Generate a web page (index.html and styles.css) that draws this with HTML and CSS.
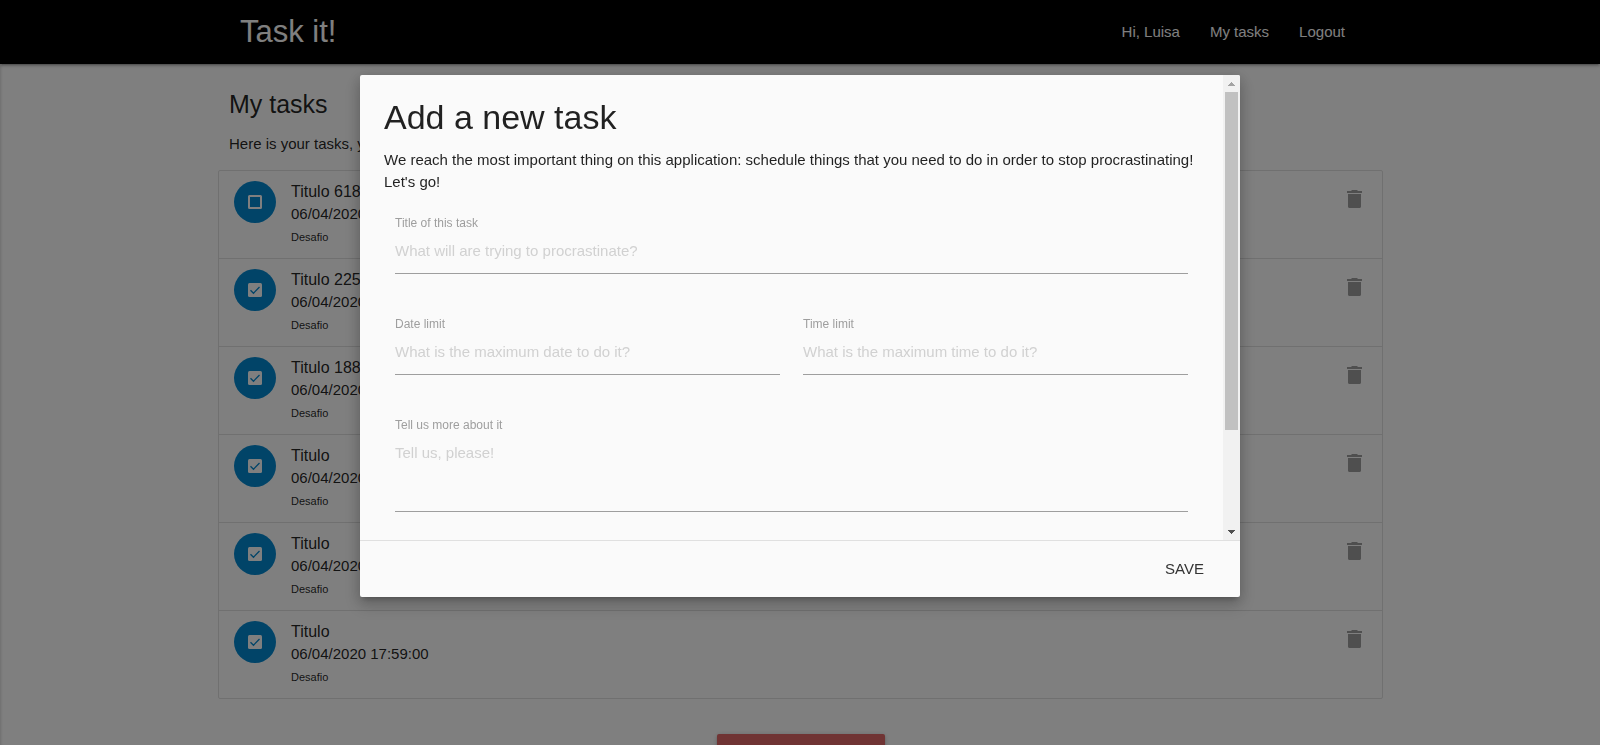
FILE: index.html
```html
<!DOCTYPE html>
<html lang="en">
<head>
<meta charset="utf-8">
<meta name="viewport" content="width=device-width, initial-scale=1">
<title>Task it!</title>
<link rel="stylesheet" href="styles.css">
</head>
<body>
<svg class="sprite" aria-hidden="true">
  <symbol id="box" viewBox="0 0 18 18"><path fill-rule="evenodd" d="M3.500 2h11A1.500 1.500 0 0 1 16 3.500v11a1.500 1.500 0 0 1-1.500 1.500h-11A1.500 1.500 0 0 1 2 14.500v-11A1.500 1.500 0 0 1 3.500 2zM4 4v10h10V4z"/></symbol>
  <symbol id="box-checked" viewBox="0 0 18 18"><rect x="2" y="2" width="14" height="14" rx="1.500"/><path d="M4.500 9.200l3 3 6-6.200" fill="none" stroke="#0288d1" stroke-width="1.300"/></symbol>
  <symbol id="trash" viewBox="0 0 24 24"><path d="M5 7h13v12.500c0 .9-.6 1.500-1.500 1.500h-10c-.9 0-1.500-.6-1.500-1.500zM4 4h4l1-1h5l1 1h4v2H4z"/></symbol>
</svg>

<header class="navbar">
  <div class="container navbar-inner">
    <a class="logo" href="#">Task it!</a>
    <nav class="nav-links">
      <a href="#">Hi, Luisa</a>
      <a href="#">My tasks</a>
      <a href="#">Logout</a>
    </nav>
  </div>
</header>

<main class="page">
  <div class="container">
    <div class="tasks">
      <h1 class="tasks-title">My tasks</h1>
      <p class="tasks-intro">Here is your tasks, you can do it!</p>
      <ul class="task-list">
        <li class="task">
          <button class="task-state" aria-label="Mark as done"><svg><use href="#box"/></svg></button>
          <div class="task-text"><span class="task-name">Titulo 618</span><span>06/04/2020 17:59:00</span><small>Desafio</small></div>
          <button class="task-delete" aria-label="Delete"><svg><use href="#trash"/></svg></button>
        </li>
        <li class="task">
          <button class="task-state" aria-label="Mark as pending"><svg><use href="#box-checked"/></svg></button>
          <div class="task-text"><span class="task-name">Titulo 225</span><span>06/04/2020 17:59:00</span><small>Desafio</small></div>
          <button class="task-delete" aria-label="Delete"><svg><use href="#trash"/></svg></button>
        </li>
        <li class="task">
          <button class="task-state" aria-label="Mark as pending"><svg><use href="#box-checked"/></svg></button>
          <div class="task-text"><span class="task-name">Titulo 188</span><span>06/04/2020 17:59:00</span><small>Desafio</small></div>
          <button class="task-delete" aria-label="Delete"><svg><use href="#trash"/></svg></button>
        </li>
        <li class="task">
          <button class="task-state" aria-label="Mark as pending"><svg><use href="#box-checked"/></svg></button>
          <div class="task-text"><span class="task-name">Titulo</span><span>06/04/2020 17:59:00</span><small>Desafio</small></div>
          <button class="task-delete" aria-label="Delete"><svg><use href="#trash"/></svg></button>
        </li>
        <li class="task">
          <button class="task-state" aria-label="Mark as pending"><svg><use href="#box-checked"/></svg></button>
          <div class="task-text"><span class="task-name">Titulo</span><span>06/04/2020 17:59:00</span><small>Desafio</small></div>
          <button class="task-delete" aria-label="Delete"><svg><use href="#trash"/></svg></button>
        </li>
        <li class="task">
          <button class="task-state" aria-label="Mark as pending"><svg><use href="#box-checked"/></svg></button>
          <div class="task-text"><span class="task-name">Titulo</span><span>06/04/2020 17:59:00</span><small>Desafio</small></div>
          <button class="task-delete" aria-label="Delete"><svg><use href="#trash"/></svg></button>
        </li>
      </ul>
      <button class="add-button" aria-label="Add a new task"></button>
    </div>
  </div>
</main>

<div class="overlay"></div>

<form class="modal" role="dialog" aria-labelledby="modal-title">
  <div class="modal-body">
    <div class="modal-content">
      <h2 class="modal-title" id="modal-title">Add a new task</h2>
      <p class="modal-intro">We reach the most important thing on this application: schedule things that you need to do in order to stop procrastinating! Let's go!</p>
      <div class="fields">
        <div class="field field-wide">
          <label for="title">Title of this task</label>
          <input id="title" type="text" placeholder="What will are trying to procrastinate?">
        </div>
        <div class="field">
          <label for="date">Date limit</label>
          <input id="date" type="text" placeholder="What is the maximum date to do it?">
        </div>
        <div class="field">
          <label for="time">Time limit</label>
          <input id="time" type="text" placeholder="What is the maximum time to do it?">
        </div>
        <div class="field field-wide">
          <label for="about">Tell us more about it</label>
          <textarea id="about" placeholder="Tell us, please!"></textarea>
        </div>
      </div>
    </div>
    <div class="scrollbar" aria-hidden="true">
      <svg class="arrow arrow-up" viewBox="0 0 17 17"><path d="M5 11h7v-1h-1v-1h-1v-1h-1v-1h-1v1h-1v1h-1v1h-1z"/></svg>
      <div class="track"><div class="thumb"></div></div>
      <svg class="arrow" viewBox="0 0 17 17"><path d="M5 7h7v1h-1v1h-1v1h-1v1h-1v-1h-1v-1h-1v-1h-1z"/></svg>
    </div>
  </div>
  <div class="modal-footer"><button class="save" type="button">SAVE</button></div>
</form>
</body>
</html>
```

FILE: styles.css
```css
* { box-sizing: border-box; }

body {
  display: flex;
  flex-direction: column;
  margin: 0;
  height: 100vh;
  overflow: hidden;
  background: #fff;
  color: rgba(0, 0, 0, 0.87);
  font: 15px/22px "Liberation Sans", Arial, sans-serif;
}

h1, h2, p, ul { margin: 0; padding: 0; font-weight: 400; }
a { color: inherit; text-decoration: none; }
button { border: 0; padding: 0; background: none; color: inherit; font: inherit; cursor: pointer; }
.sprite { position: absolute; width: 0; height: 0; }

.container { width: 70%; margin: 0 auto; }

.navbar {
  position: relative;
  flex: none;
  background: #000;
  color: #fff;
  box-shadow: 0 2px 2px rgba(0, 0, 0, 0.14), 0 3px 1px -2px rgba(0, 0, 0, 0.12), 0 1px 5px rgba(0, 0, 0, 0.2);
}
.navbar-inner { display: flex; justify-content: space-between; align-items: center; height: 64px; }
.logo { font-size: 31px; line-height: 64px; }
.nav-links { display: flex; }
.nav-links a { padding: 0 15px; line-height: 64px; }

.page { flex: 1; min-height: 0; overflow: hidden; box-shadow: inset 3px 0 3px -2px rgba(0, 0, 0, 0.15); }
.tasks { display: flex; flex-direction: column; margin: 0 -23px 0 -22px; padding-top: 26px; }
.tasks-title { padding: 0 11px; font-size: 25px; line-height: 28px; }
.tasks-intro { padding: 15px 11px; }

.task-list { border: 1px solid #e0e0e0; border-radius: 2px; list-style: none; }
.task { display: flex; gap: 15px; padding: 10px 15px 9px; border-bottom: 1px solid #e0e0e0; }
.task:last-child { border-bottom: 0; }
.task-state {
  display: grid;
  place-items: center;
  width: 42px;
  height: 42px;
  border-radius: 50%;
  background: #0288d1;
}
.task-state svg { width: 18px; height: 18px; fill: #fff; }
.task-text { display: flex; flex: 1; flex-direction: column; }
.task-name { font-size: 16px; }
.task-text small { font-size: 11px; line-height: 24px; }
.task-delete { align-self: flex-start; padding: 6px 0; }
.task-delete svg { display: block; width: 24px; height: 24px; fill: #9e9e9e; }

.add-button {
  align-self: center;
  min-width: 168px;
  height: 36px;
  margin-top: 35px;
  border-radius: 2px;
  background: #e06868;
  color: #fff;
  box-shadow: 0 2px 2px rgba(0, 0, 0, 0.14), 0 3px 1px -2px rgba(0, 0, 0, 0.12), 0 1px 5px rgba(0, 0, 0, 0.2);
}

.overlay { position: fixed; inset: 0; background: rgba(0, 0, 0, 0.5); }

.modal {
  position: fixed;
  top: 10vh;
  left: 0;
  right: 0;
  display: flex;
  flex-direction: column;
  width: 55%;
  height: calc(70vh + 1px);
  margin: 0 auto;
  overflow: hidden;
  border-radius: 2px;
  background: #fafafa;
  box-shadow: 0 8px 17px 2px rgba(0, 0, 0, 0.14), 0 3px 14px 2px rgba(0, 0, 0, 0.12), 0 5px 5px -3px rgba(0, 0, 0, 0.2);
}
.modal-body { display: flex; flex: 1; min-height: 0; }
.modal-content { flex: 1; padding: 24px; overflow: hidden; }
.modal-title { font-size: 34px; line-height: 36px; }
.modal-intro { padding-top: 14px; }

.fields { display: grid; grid-template-columns: 1fr 1fr; column-gap: 23px; padding: 22px 11px 0; }
.field { display: flex; flex-direction: column; height: 101px; }
.field-wide { grid-column: 1 / -1; }
.field label { color: #9e9e9e; font-size: 12px; line-height: 16px; }
.field input, .field textarea {
  width: 100%;
  height: 43px;
  padding: 0 0 2px;
  border: 0;
  border-bottom: 1px solid #9e9e9e;
  outline: 0;
  background: transparent;
  color: inherit;
  font: inherit;
  resize: none;
}
.field textarea { flex: none; height: 79px; padding-top: 9px; }
.field ::placeholder { color: #d1d1d1; opacity: 1; }

.scrollbar { display: flex; flex-direction: column; width: 17px; background: #f1f1f1; }
.arrow { width: 17px; height: 17px; fill: #505050; }
.arrow-up { fill: #a3a3a3; }
.track { flex: 1; padding: 0 2px; }
.thumb { height: 78.5%; background: #c1c1c1; }

.modal-footer { display: flex; justify-content: flex-end; align-items: center; height: 57px; padding: 0 20px; border-top: 1px solid #e0e0e0; }
.save { padding: 0 16px; color: #343434; line-height: 36px; }
```
